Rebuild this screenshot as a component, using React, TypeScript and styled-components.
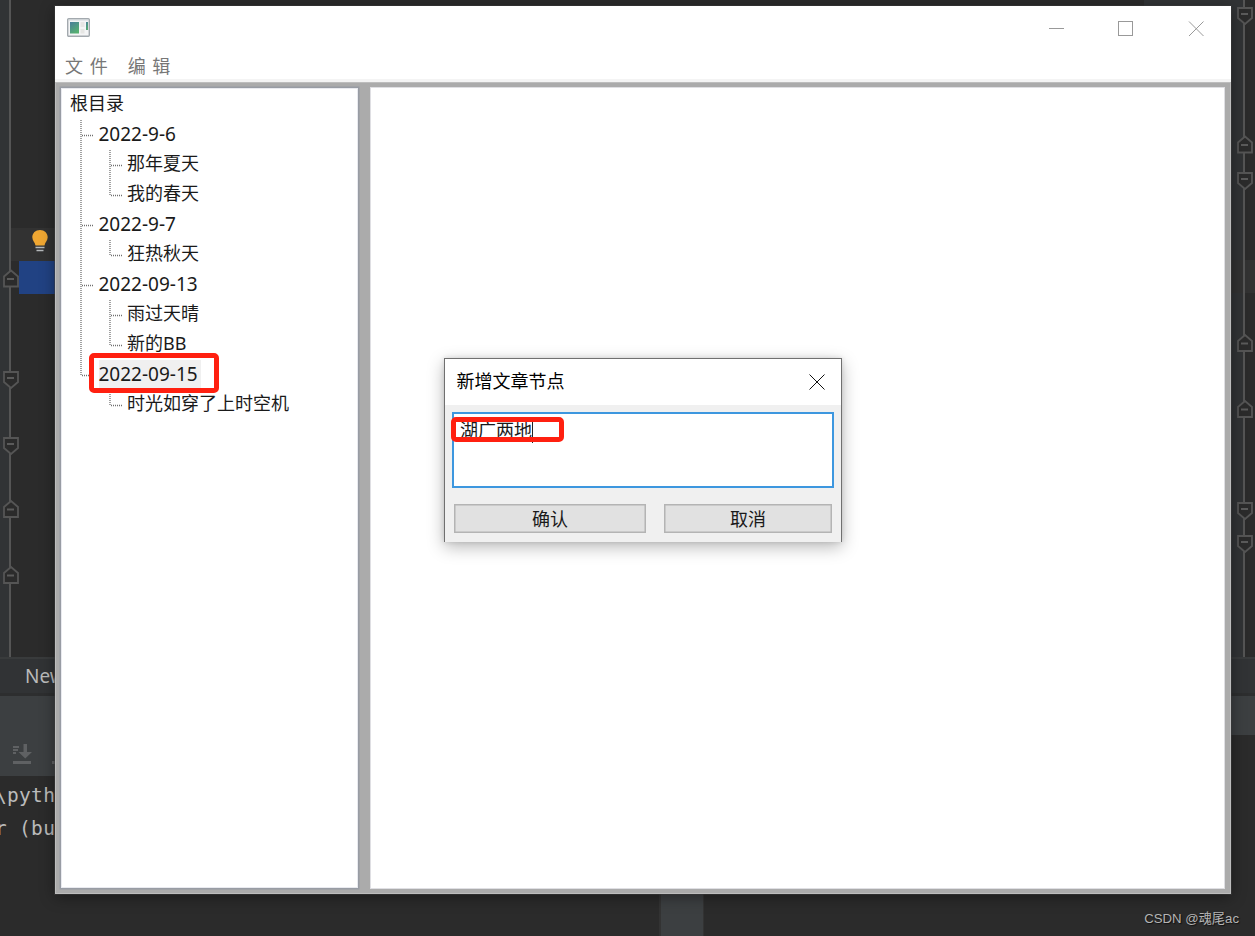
import React from "react";
import styled, { createGlobalStyle } from "styled-components";

const uiFont = `"Noto Sans", "Noto Sans CJK SC", sans-serif`;

type Fold = { y: number; dir: "up" | "down" };

const leftFolds: Fold[] = [
  { y: 269, dir: "up" },
  { y: 371, dir: "down" },
  { y: 437, dir: "down" },
  { y: 499.5, dir: "up" },
  { y: 565.5, dir: "up" },
];

const rightFolds: Fold[] = [
  { y: 7, dir: "down" },
  { y: 135, dir: "up" },
  { y: 172, dir: "down" },
  { y: 333.5, dir: "up" },
  { y: 399.5, dir: "up" },
  { y: 502, dir: "down" },
  { y: 535, dir: "down" },
];

const tree = [
  { name: "2022-9-6", children: ["那年夏天", "我的春天"] },
  { name: "2022-9-7", children: ["狂热秋天"] },
  { name: "2022-09-13", children: ["雨过天晴", "新的BB"] },
  { name: "2022-09-15", children: ["时光如穿了上时空机"], selected: true },
];

function FoldRail({ folds }: { folds: Fold[] }) {
  return (
    <svg width="18" height="657" viewBox="0 0 18 657">
      <path d="M8 0V657" stroke="#555555" strokeWidth="2" />
      {folds.map(({ y, dir }) => (
        <g key={y} transform={`translate(1 ${y})`}>
          <path
            d={
              dir === "up"
                ? "M1 17.5V7.5L8 1.5L15 7.5V17.5Z"
                : "M1 1H15V11L8 17L1 11Z"
            }
            fill="#2b2b2b"
            stroke="#555555"
            strokeWidth="1.8"
          />
          <path
            d={dir === "up" ? "M4 10H11" : "M4 7H11"}
            stroke="#5b5b5b"
            strokeWidth="2"
          />
        </g>
      ))}
    </svg>
  );
}

// dotted tree lines in front of one row
function Guide({
  last,
  through,
  tee,
}: {
  last?: boolean;
  through?: boolean;
  tee?: boolean;
}) {
  return (
    <SGuide width="28" height="30" viewBox="0 0 28 30">
      <g stroke="#707070" strokeWidth="1.3" strokeDasharray="1 1">
        {(through || tee) && <path d={last ? "M11 0V16" : "M11 0V30"} />}
        {tee && <path d="M12 15.5H24" />}
      </g>
    </SGuide>
  );
}

function Backdrop() {
  return (
    <SIde>
      <SEditor>
        <SGutter>
          <FoldRail folds={leftFolds} />
        </SGutter>
        <SCode>
          <SCaretRow>
            <svg width="18" height="24" viewBox="0 0 18 24">
              <path
                d="M9 1C4.5 1 1.3 4.2 1.3 8.3C1.3 11.5 4 13.4 4.5 16.5H13.5C14 13.4 16.7 11.5 16.7 8.3C16.7 4.2 13.5 1 9 1Z"
                fill="#f0a732"
              />
              <path
                d="M4.5 18.5H13.5M5.5 21.5H12.5"
                stroke="#b5b9bb"
                strokeWidth="1.5"
              />
            </svg>
          </SCaretRow>
          <SSelection />
        </SCode>
        <SRightCode>
          <SRightRow />
          <SRailRight>
            <FoldRail folds={rightFolds} />
          </SRailRight>
        </SRightCode>
      </SEditor>
      <STabs>New</STabs>
      <STools>
        <SToolsLeft>
          <svg width="44" height="22" viewBox="0 0 44 22">
            <g fill="#5f6163">
              <path d="M0 2H6V4H0zM0 5H5V7H0zM0 8H3V10H0z" />
              <path d="M10.5 0H14V8H19L12.25 14.5L5.5 8H10.5z" />
              <path d="M0 17H18V20H0zM39 17H44V20H39z" />
            </g>
          </svg>
        </SToolsLeft>
        <SToolsRight />
      </STools>
      <SConsole>
        <SLine>{"\\pyth"}</SLine>
        <SLine>{"r (bu"}</SLine>
      </SConsole>
      <SStatus>
        <SStatusTab />
        <SMark>CSDN @魂尾ac</SMark>
      </SStatus>
    </SIde>
  );
}

function Dialog() {
  return (
    <SDialog>
      <SDialogTitle>
        <SDialogName>新增文章节点</SDialogName>
        <svg width="16" height="16" viewBox="0 0 16 16">
          <path d="M.5 .5L15.5 15.5M15.5 .5L.5 15.5" stroke="#111" />
        </svg>
      </SDialogTitle>
      <SDialogBody>
        <SInput>
          湖广两地
          <SCursor />
          <SInputMark />
        </SInput>
        <SButtons>
          <SButton $width={192}>确认</SButton>
          <SButton $width={168}>取消</SButton>
        </SButtons>
      </SDialogBody>
    </SDialog>
  );
}

function App() {
  return (
    <SDesktop>
      <GlobalStyle />
      <Backdrop />
      <SWindow>
        <STitleBar>
          <svg width="23" height="19" viewBox="0 0 23 19">
            <defs>
              <linearGradient id="pane" x1="0" y1="0" x2="0.6" y2="1">
                <stop offset="0" stopColor="#4b7d9c" />
                <stop offset="1" stopColor="#56b070" />
              </linearGradient>
            </defs>
            <rect x=".7" y=".7" width="21.6" height="17.6" rx="1" fill="#f4f5f6" stroke="#a3a9ae" strokeWidth="1.4" />
            <path d="M1.5 2H21.5" stroke="#d3d8dc" />
            <rect x="3" y="4" width="9" height="11.5" fill="url(#pane)" />
            <rect x="13.5" y="4" width="4" height="5" fill="#e6e6e4" />
            <rect x="13.5" y="11" width="4" height="4.5" fill="#e6e6e4" />
            <rect x="19" y="4" width="2" height="8" fill="url(#pane)" />
          </svg>
          <SControls>
            <svg width="156" height="16" viewBox="0 0 156 16">
              <g fill="none" stroke="#999999">
                <path d="M0 7.5H15" />
                <rect x="69.5" y=".5" width="14" height="14" />
                <path d="M140 .5L154.5 15M154.500 .5L140 15" />
              </g>
            </svg>
          </SControls>
        </STitleBar>
        <SMenuBar>
          <span>文 件</span>
          <span>编 辑</span>
        </SMenuBar>
        <SBody>
          <STree>
            <SRow>
              <SLabel>根目录</SLabel>
            </SRow>
            {tree.map((node, i) => {
              const isLast = i === tree.length - 1;
              return (
                <React.Fragment key={node.name}>
                  <SRow>
                    <Guide tee last={isLast} />
                    <SLabel $date $selected={node.selected}>
                      {node.name}
                      {node.selected && <SRowMark />}
                    </SLabel>
                  </SRow>
                  {node.children.map((child, j) => (
                    <SRow key={child}>
                      <Guide through={!isLast} />
                      <Guide tee last={j === node.children.length - 1} />
                      <SLabel>{child}</SLabel>
                    </SRow>
                  ))}
                </React.Fragment>
              );
            })}
          </STree>
          <SContent />
        </SBody>
      </SWindow>
      <Dialog />
    </SDesktop>
  );
}

const GlobalStyle = createGlobalStyle`
  body {
    margin: 0;
    overflow: hidden;
    background: #2b2b2b;
  }
  * {
    box-sizing: border-box;
  }
  svg {
    display: block;
    flex-shrink: 0;
  }
`;

const SDesktop = styled.div`
  position: relative;
  width: 1255px;
  height: 936px;
  overflow: hidden;
  font-family: ${uiFont};
  font-size: 18px;
  color: #1a1a1a;
`;

const SIde = styled.div`
  display: flex;
  flex-direction: column;
  height: 100%;
  background: #2b2b2b;
`;

const SEditor = styled.div`
  display: flex;
  height: 657px;
`;

const SGutter = styled.div`
  z-index: 1;
  width: 10px;
  padding-left: 2px;
  background: #313335;
`;

const SCode = styled.div`
  flex: 1;
  padding-top: 228px;
`;

const SCaretRow = styled.div`
  height: 33px;
  margin-left: 1px;
  padding: 1px 0 0 20px;
  background: #323232;
`;

const SSelection = styled.div`
  width: 60px;
  height: 33px;
  margin-left: 9px;
  background: #214283;
`;

const SRightCode = styled.div`
  display: grid;
  width: 111px;
  background: linear-gradient(90deg, #313335 100px, #2b2b2b 100px);
`;

const SRightRow = styled.div`
  grid-area: 1 / 1;
  height: 33px;
  margin-top: 260px;
  background: #323232;
`;

const SRailRight = styled.div`
  grid-area: 1 / 1;
  padding-left: 92px;
`;

const STabs = styled.div`
  height: 39px;
  padding-left: 25px;
  border-top: 2px solid #393b3c;
  border-bottom: 3px solid #2d2e2f;
  background: #313335;
  color: #bbbbbb;
  font-size: 19px;
  line-height: 34px;
`;

const STools = styled.div`
  display: flex;
  align-items: flex-start;
  justify-content: space-between;
  height: 80px;
`;

const SToolsLeft = styled.div`
  width: 600px;
  height: 80px;
  padding: 48px 0 0 13px;
  background: #3c3f41;
`;

const SToolsRight = styled.div`
  width: 300px;
  height: 39px;
  background: #3c3f41;
`;

const SConsole = styled.div`
  height: 118px;
  padding-top: 3px;
  margin-left: -5px;
  color: #bbbbbb;
  font-family: "DejaVu Sans Mono", monospace;
  font-size: 19.5px;
  letter-spacing: 0.3px;
`;

const SLine = styled.div`
  height: 33px;
  line-height: 33px;
  white-space: pre;
`;

const SStatus = styled.div`
  display: flex;
  justify-content: space-between;
  height: 42px;
  padding: 0 16px 0 659px;
`;

const SStatusTab = styled.div`
  width: 45px;
  border: solid #333333;
  border-width: 0 1px 0 2px;
  background: #3c3f41;
`;

const SMark = styled.span`
  color: #b4b4b4;
  font-family: "Liberation Sans", "Noto Sans CJK SC", sans-serif;
  font-size: 13.2px;
  line-height: 50px;
  text-shadow: 1px 1px 1px #111111;
`;

const SWindow = styled.div`
  position: absolute;
  left: 55px;
  top: 6px;
  display: flex;
  flex-direction: column;
  width: 1176px;
  height: 888px;
  background: #ffffff;
  box-shadow:
    0 0 0 1px rgba(60, 60, 60, 0.5),
    0 3px 14px rgba(0, 0, 0, 0.4);
`;

const STitleBar = styled.div`
  display: flex;
  justify-content: space-between;
  height: 44px;
  padding: 12px 26px 0 12px;
`;

const SControls = styled.div`
  padding-top: 3px;
`;

const SMenuBar = styled.div`
  display: flex;
  gap: 20px;
  height: 32px;
  padding-left: 10px;
  border-bottom: 3px solid #f4f4f4;
  color: #777777;
  line-height: 32px;
  word-spacing: 2px;
`;

const SBody = styled.div`
  flex: 1;
  display: flex;
  gap: 11px;
  padding: 4px 5px;
  border: 1px solid #bdbdbd;
  background: #ababab;
`;

const STree = styled.div`
  width: 299px;
  margin-left: -1px;
  padding: 1px 0 0 9px;
  border: 1px solid #989ca4;
  background: #ffffff;
  box-shadow:
    inset 0 0 0 1px #e9eaef,
    0 0 0 0.5px #989ca4;
`;

const SContent = styled.div`
  flex: 1;
  border: 1px solid #dfdfe3;
  background: #ffffff;
`;

const SRow = styled.div`
  display: flex;
  align-items: flex-start;
  height: 30px;
`;

const SGuide = styled.svg`
  margin: 1px 0.5px 0 0;
`;

const SLabel = styled.span<{ $date?: boolean; $selected?: boolean }>`
  position: relative;
  height: 28px;
  margin-top: 1px;
  padding: 0 3px 0 0;
  font-size: ${({ $date }) => ($date ? "19px" : "18px")};
  line-height: ${({ $date }) => ($date ? "28px" : "27px")};
  white-space: nowrap;
  background: ${({ $selected }) => ($selected ? "#f0f0f0" : "transparent")};
`;

// red annotation frames
const SRowMark = styled.i`
  position: absolute;
  left: -9.5px;
  top: -7px;
  width: 130px;
  height: 40px;
  border: 5px solid #ff2010;
  border-radius: 5px;
  z-index: 1;
`;

const SInputMark = styled.i`
  position: absolute;
  left: -3px;
  top: 3px;
  width: 113px;
  height: 25px;
  border: 5px solid #ff2010;
  border-radius: 5px;
`;

const SDialog = styled.div`
  position: absolute;
  left: 444px;
  top: 358px;
  width: 398px;
  height: 184px;
  border: 1px solid #707070;
  border-bottom: 0;
  background: #f0f0f0;
  box-shadow:
    0 5px 16px rgba(0, 0, 0, 0.28),
    0 0 5px rgba(0, 0, 0, 0.12);
`;

const SDialogTitle = styled.div`
  display: flex;
  align-items: center;
  justify-content: space-between;
  height: 46px;
  padding: 0 16.5px 1px 11.5px;
  background: #ffffff;
  color: #000000;
`;

const SDialogName = styled.span`
  padding-bottom: 3px;
`;

const SDialogBody = styled.div`
  padding: 7px 7px 0;
`;

const SInput = styled.div`
  position: relative;
  display: flex;
  height: 76px;
  padding: 2px 0 0 6px;
  border: 2px solid #3d97df;
  background: #ffffff;
  line-height: 28px;
`;

const SCursor = styled.i`
  width: 1px;
  height: 26px;
  margin-top: 1px;
  background: #222222;
`;

const SButtons = styled.div`
  display: flex;
  justify-content: space-between;
  padding: 16px 2px 0;
`;

const SButton = styled.button<{ $width: number }>`
  width: ${({ $width }) => $width}px;
  height: 29px;
  padding: 0;
  border: 1px solid #b4b4b4;
  background: #e1e1e1;
  color: #1a1a1a;
  font-family: ${uiFont};
  font-size: 18px;
  line-height: 24px;
  box-shadow: inset 0 0 0 0.5px #b4b4b4;
`;

export default App;
